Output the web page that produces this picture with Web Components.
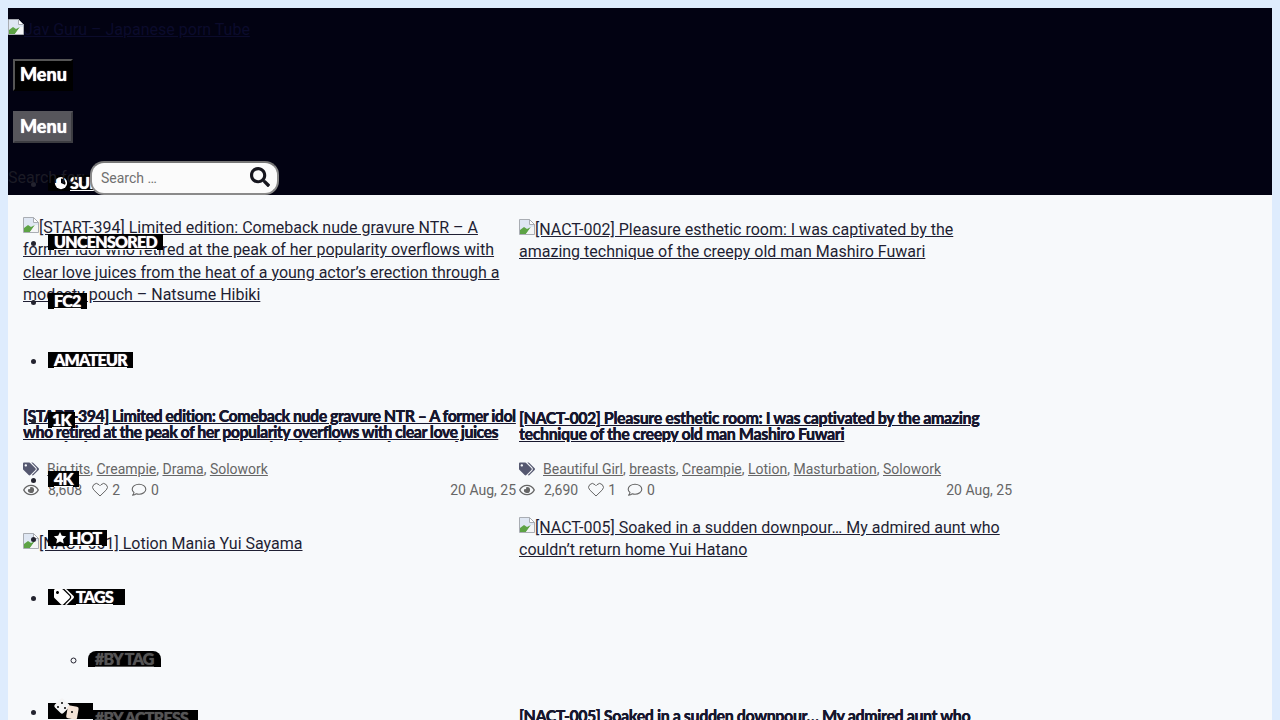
<!DOCTYPE html>
<html>
<head>
<meta charset="utf-8">
<title>Jav Guru</title>
<style>
	html { overflow:hidden; height:100%; }
	body { margin:8px; background:#deecfd; font-family:Roboto,"Liberation Sans",sans-serif; }
</style>
</head>
<body>
<site-page>
	<site-header slot="header"></site-header>
	<main-menu slot="menu"></main-menu>
	<search-box slot="over"></search-box>
	<post-card slot="post" top="8" tags="Big tits, Creampie, Drama, Solowork" views="8,608" likes="2" comments="0" date="20 Aug, 25"
		code="[START-394]" thumb="Limited edition: Comeback nude gravure NTR – A former idol who retired at the peak of her popularity overflows with clear love juices from the heat of a young actor’s erection through a modesty pouch – Natsume Hibiki"></post-card>
	<post-card slot="post" top="10" spacing="-.42px" tags="Beautiful Girl, breasts, Creampie, Lotion, Masturbation, Solowork" views="2,690" likes="1" comments="0" date="20 Aug, 25"
		code="[NACT-002]" thumb="Pleasure esthetic room: I was captivated by the amazing technique of the creepy old man Mashiro Fuwari"></post-card>
	<post-card slot="post" top="24" code="[NACT-001]" thumb="Lotion Mania Yui Sayama"></post-card>
	<post-card slot="post" top="8" spacing="-.42px" code="[NACT-005]" thumb="Soaked in a sudden downpour… My admired aunt who couldn’t return home Yui Hatano"></post-card>
</site-page>

<script>
const ICONS={
	tags:'<svg viewBox="0 0 640 512"><path fill="currentColor" d="M497.941 225.941L286.059 14.059A48 48 0 0 0 252.118 0H48C21.49 0 0 21.49 0 48v204.118a48 48 0 0 0 14.059 33.941l211.882 211.882c18.744 18.745 49.136 18.746 67.882 0l204.118-204.118c18.745-18.745 18.745-49.137 0-67.882zM112 160c-26.51 0-48-21.49-48-48s21.49-48 48-48 48 21.49 48 48-21.49 48-48 48zm513.941 133.823L421.823 497.941c-18.745 18.745-49.137 18.745-67.882 0l-.36-.36L527.64 323.522c16.999-16.999 26.36-39.6 26.36-63.64s-9.362-46.641-26.36-63.64L331.397 0h48.721a48 48 0 0 1 33.941 14.059l211.882 211.882c18.745 18.745 18.745 49.137 0 67.882z"/></svg>',
	eye:'<svg viewBox="0 0 576 512"><path fill="currentColor" d="M288 144a110.94 110.94 0 0 0-31.24 5 55.4 55.4 0 0 1 7.24 27 56 56 0 0 1-56 56 55.4 55.4 0 0 1-27-7.24A111.71 111.71 0 1 0 288 144zm284.52 97.4C518.29 135.59 410.93 64 288 64S57.68 135.64 3.48 241.41a32.35 32.35 0 0 0 0 29.19C57.71 376.41 165.07 448 288 448s230.32-71.64 284.52-177.41a32.35 32.35 0 0 0 0-29.19zM288 400c-98.65 0-189.09-55-237.93-144C98.91 167 189.34 112 288 112s189.09 55 237.93 144C477.1 345 386.66 400 288 400z"/></svg>',
	heart:'<svg class="line" viewBox="0 0 16 16"><path fill="none" stroke="currentColor" stroke-width="1" stroke-linejoin="round" d="M8 14 1.700 7.900a3.700 3.700 0 0 1 0-5.200 3.700 3.700 0 0 1 5.300 0L8 3.700l1-1a3.700 3.700 0 0 1 5.300 0 3.700 3.700 0 0 1 0 5.200z"/></svg>',
	comment:'<svg class="line" viewBox="0 0 16 16"><path fill="none" stroke="currentColor" stroke-width="1.100" stroke-linejoin="round" d="M8 2.200c3.700 0 6.800 2.200 6.800 5s-3.100 5-6.800 5c-1 0-1.900-.2-2.700-.5-.9.7-2.200 1.300-3.700 1.400.7-.7 1.300-1.700 1.400-2.600C1.700 9.600 1.200 8.400 1.200 7.200c0-2.800 3.100-5 6.800-5z"/></svg>',
	search:'<svg viewBox="0 0 512 512"><path fill="currentColor" d="M505 442.700L405.300 343c-4.500-4.500-10.600-7-17-7H372c27.600-35.300 44-79.700 44-128C416 93.100 322.900 0 208 0S0 93.100 0 208s93.100 208 208 208c48.300 0 92.700-16.400 128-44v16.300c0 6.400 2.500 12.500 7 17l99.700 99.700c9.400 9.400 24.600 9.400 33.900 0l28.300-28.300c9.400-9.400 9.400-24.600.1-34zM208 336c-70.700 0-128-57.200-128-128 0-70.700 57.200-128 128-128 70.700 0 128 57.200 128 128 0 70.700-57.200 128-128 128z"/></svg>',
	star:'<svg viewBox="0 0 16 16"><path fill="currentColor" d="m8 1 2.100 4.500 4.900.6-3.600 3.400.9 4.900L8 11.900l-4.300 2.500.9-4.900L1 6.100l4.900-.6z"/></svg>',
	disc:'<svg viewBox="0 0 16 16"><circle cx="8" cy="8" r="7" fill="currentColor"/><path fill="#000" d="M8 8V3a5 5 0 0 1 4.600 7z"/></svg>',
	dice:'<svg viewBox="0 0 24 18" style="overflow:visible"><rect x="2" y="-1" width="12" height="12" rx="2" transform="rotate(45 8 5)" fill="#f4f4f4"/><rect x="13" y="5" width="11" height="13" rx="2" transform="rotate(10 18 11)" fill="#f3e3d6"/><circle cx="8" cy="2" r="1" fill="#000"/><circle cx="4" cy="6" r="1" fill="#000"/><circle cx="11" cy="7" r="1" fill="#000"/><circle cx="18" cy="11" r="1" fill="#000"/></svg>'
};

// the icon a browser shows for an image that did not load
const BROKEN_IMG='<svg width="16" height="16" viewBox="0 0 16 16"><path d="M.5.5h10l5 5v10H.5z" fill="#dfe7f3" stroke="#a9adb3"/><path d="M10.500.5v5h5z" fill="#fff" stroke="#a9adb3"/><path d="M1 15v-4l4-3 3 2 4-2-5 7z" fill="#5da345"/><path d="M7 15l5-7 3 0v7z" fill="#f4f5f6"/></svg>';

class SitePage extends HTMLElement {
	constructor() {
		super();
		this.attachShadow({mode:'open'}).innerHTML=`<style>
			:host { display:block; position:relative; width:1264px; background:#f7f9fb; min-height:800px; }
			.posts { display:grid; grid-template-columns:496px 496px; justify-content:start; padding:0 15px; }
			.menu { position:absolute; left:0; top:166.8px; }
		</style>
		<slot name="header"></slot>
		<div class="posts"><slot name="post"></slot></div>
		<slot name="over"></slot>
		<div class="menu"><slot name="menu"></slot></div>`;
	}
}

class SiteHeader extends HTMLElement {
	constructor() {
		super();
		this.attachShadow({mode:'open'}).innerHTML=`<style>
			:host { display:block; height:187px; background:#020212; font-size:16px; }
			.logo { display:block; padding-top:11px; height:40px; line-height:22px; }
			.logo a { color:#0b0b2c; text-decoration:underline; }
			.buttons { display:flex; flex-direction:column; gap:20px; padding-left:5px; }
		</style>
		<div class="logo"><a>${BROKEN_IMG}Jav Guru – Japanese porn Tube</a></div>
		<div class="buttons">
			<menu-button></menu-button>
			<menu-button active></menu-button>
		</div>`;
	}
}

class MenuButton extends HTMLElement {
	constructor() {
		super();
		this.attachShadow({mode:'open'}).innerHTML=`<style>
			:host { display:block; width:60px; height:32px; box-sizing:border-box; background:#000; color:#fff;
				border:2px solid; border-color:#555 #000 #000 #555; padding-left:5px;
				font:900 18px/26px Lato,sans-serif; text-shadow:0 0 1px #fff; }
			:host([active]) { background:#57565c; border-color:#57565c #3d3d42 #3d3d42 #57565c; }
		</style>Menu`;
	}
}

class SearchBox extends HTMLElement {
	constructor() {
		super();
		this.attachShadow({mode:'open'}).innerHTML=`<style>
			:host { display:flex; align-items:center; position:absolute; z-index:2; left:0; top:153px; font:16px/34px Roboto,sans-serif; }
			label { width:82px; color:#1b1b25; white-space:nowrap; }
			.field { display:flex; align-items:center; justify-content:space-between; width:189px; height:34px; box-sizing:border-box;
				padding:0 7px 0 9px; background:#fbfbfb; border:2px solid #8a8a8a; border-top-color:#777; border-radius:14px;
				font-size:14px; color:#707070; line-height:1; }
			svg { width:20px; height:20px; color:#16161e; display:block; }
			.icon { margin-top:-3px; }
		</style>
		<label>Search for:</label>
		<div class="field"><span>Search …</span><span class="icon">${ICONS.search}</span></div>`;
	}
}

class MenuItem extends HTMLElement {
	constructor() {
		super();
		this.attachShadow({mode:'open'});
	}
	connectedCallback() {
		let icon=this.getAttribute('icon');
		let after=this.getAttribute('after');
		this.shadowRoot.innerHTML=`<style>
			:host { display:list-item; list-style:disc; height:59.2px; color:#23232f; }
			:host([sub]) { list-style:circle; }
			a { display:inline-flex; align-items:center; gap:2px; height:16px; padding:0 var(--pad,6px); background:#000; color:#fff;
				font:900 16px/16px Lato,sans-serif; letter-spacing:-.7px; text-decoration:underline; text-shadow:0 0 1px #fff; white-space:nowrap; vertical-align:top; }
			:host([sub]) a, a.after { color:#555; text-shadow:0 0 1px #555; }
			:host([sub]) a { border-radius:8px 8px 0 0; padding:0 7px; }
			a.after { margin-top:7px; padding:0 2px; width:101px; }
			a.dice { padding-right:15px; }
			a.tags { padding-right:12px; }
			svg { width:14px; height:14px; display:block; }
			a.tags svg { width:20px; height:16px; }
			a.dice svg { width:24px; height:18px; margin-top:-3px; }
		</style>
		<a class="${icon||''}">${icon?ICONS[icon]:''}<slot></slot></a>${after?`<a class="after">${after}</a>`:''}`;
	}
}

class MainMenu extends HTMLElement {
	constructor() {
		super();
		this.attachShadow({mode:'open'}).innerHTML=`<style>
			:host { display:block; }
			ul { margin:0; padding:0 0 0 40px; list-style:disc; }
			.sub { padding-left:40px; margin:3px 0 -7px; }
		</style>
		<ul>
			<menu-item icon="disc">SUBTITLES</menu-item>
			<menu-item>UNCENSORED</menu-item>
			<menu-item>FC2</menu-item>
			<menu-item>AMATEUR</menu-item>
			<menu-item style="--pad:4px">1K</menu-item>
			<menu-item>4K</menu-item>
			<menu-item icon="star" style="--pad:5px">HOT</menu-item>
			<menu-item icon="tags">TAGS</menu-item>
			<ul class="sub"><menu-item sub>#BY TAG</menu-item></ul>
			<menu-item icon="dice" after="#BY ACTRESS"></menu-item>
		</ul>`;
	}
}

class PostCard extends HTMLElement {
	constructor() {
		super();
		this.attachShadow({mode:'open'});
	}
	connectedCallback() {
		let g=(n)=>this.getAttribute(n)||'';
		let tags=g('tags').split(', ').filter(t=>t).map(t=>`<a>${t}</a>`).join(', ');
		let top=parseFloat(g('top'))||0;
		let meta=g('views')?`
			<div class="row tags">${ICONS.tags}<span class="t">${tags}</span></div>
			<div class="row meta">${ICONS.eye}<span class="v">${g('views')}</span>
				<span class="s">${ICONS.heart}${g('likes')}</span>
				<span class="s">${ICONS.comment}${g('comments')}</span>
				<span class="date">${g('date')}</span></div>`:'';
		this.shadowRoot.innerHTML=`<style>
			:host { display:block; width:494px; height:300px; color:#17172e; }
			.thumb { padding-top:${top+14}px; box-sizing:border-box; height:192px; font:16px/22.4px Roboto,sans-serif; }
			.thumb a { color:#1f1f33; text-decoration:underline; }
			h2 { margin:${top+13}px 0 0; height:${42-top}px; overflow:hidden; font:900 16px/16px Lato,sans-serif; letter-spacing:${g('spacing')||'-.55px'}; text-shadow:0 0 .6px #17172e; }
			h2 a { text-decoration:underline; color:inherit; }
			h2 b { font-weight:900; letter-spacing:-.5px; }
			.row { display:flex; align-items:center; height:21px; font-size:14px; color:#666; }
			.row svg { width:16px; height:14px; display:block; flex:none; color:#555870; }
			.row svg.line { height:16px; }
			.tags { margin-top:16.5px; }
			.t { margin-left:8px; } .t a { text-decoration:underline; }
			.meta { margin-right:1px; }
			.meta svg { color:#666; }
			.v { margin-left:9px; margin-right:10px; }
			.s { display:flex; align-items:center; gap:4px; margin-right:11px; }
			.date { margin-left:auto; }
		</style>
		<div class="thumb"><a>${BROKEN_IMG}${g('code')} ${g('thumb')}</a></div>
		<h2><a><b>${g('code')}</b> ${g('thumb')}</a></h2>
		${meta}`;
	}
}

customElements.define("site-page", SitePage);
customElements.define("site-header", SiteHeader);
customElements.define("menu-button", MenuButton);
customElements.define("search-box", SearchBox);
customElements.define("menu-item", MenuItem);
customElements.define("main-menu", MainMenu);
customElements.define("post-card", PostCard);
</script>
</body>
</html>
